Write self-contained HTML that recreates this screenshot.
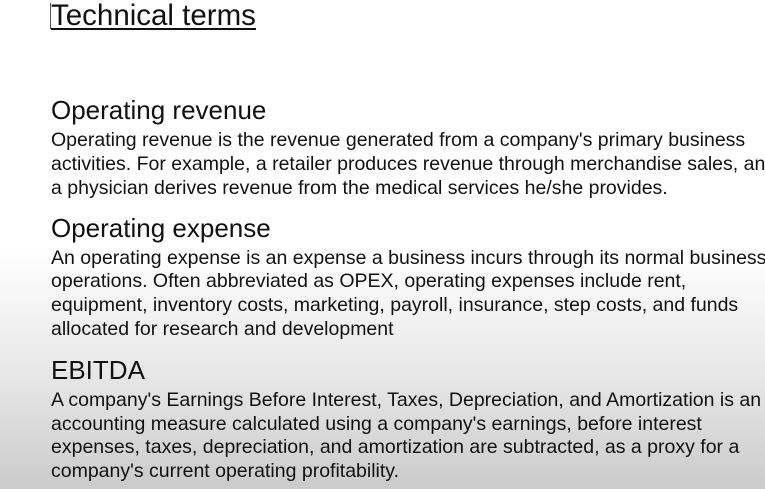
<!DOCTYPE html>
<html><head><meta charset="utf-8"><style>
html,body{margin:0;padding:0}
body{width:765px;height:489px;overflow:hidden;position:relative;font-family:"Liberation Sans",Arial,sans-serif;color:#111;
background:linear-gradient(to bottom,#fff 0px,#fff 250px,#e6e6e6 380px,#cbcbcb 489px);}
.l{position:absolute;left:51px;white-space:nowrap;font-size:19.5px;line-height:20px}
.h{position:absolute;left:51px;white-space:nowrap;font-size:26px;line-height:26px}
.t{position:absolute;left:51px;top:1px;font-size:29.5px;line-height:30px;white-space:nowrap}
.u{position:absolute;left:51px;top:28px;width:205px;height:2px;background:#111}
.v{position:absolute;left:50px;top:3px;width:1px;height:26px;background:#555}
</style></head><body>
<div class="t">Technical terms</div><div class="u"></div><div class="v"></div>
<div class="h" style="top:97px">Operating revenue</div>
<div class="l" style="top:130px">Operating revenue is the revenue generated from a company's primary business</div>
<div class="l" style="top:154px">activities. For example, a retailer produces revenue through merchandise sales, and</div>
<div class="l" style="top:178px">a physician derives revenue from the medical services he/she provides.</div>
<div class="h" style="top:215px">Operating expense</div>
<div class="l" style="top:248px">An operating expense is an expense a business incurs through its normal business</div>
<div class="l" style="top:271px">operations. Often abbreviated as OPEX, operating expenses include rent,</div>
<div class="l" style="top:295px">equipment, inventory costs, marketing, payroll, insurance, step costs, and funds</div>
<div class="l" style="top:319px">allocated for research and development</div>
<div class="h" style="top:357px">EBITDA</div>
<div class="l" style="top:390px">A company's Earnings Before Interest, Taxes, Depreciation, and Amortization is an</div>
<div class="l" style="top:414px">accounting measure calculated using a company's earnings, before interest</div>
<div class="l" style="top:437px">expenses, taxes, depreciation, and amortization are subtracted, as a proxy for a</div>
<div class="l" style="top:461px">company's current operating profitability.</div>
</body></html>
